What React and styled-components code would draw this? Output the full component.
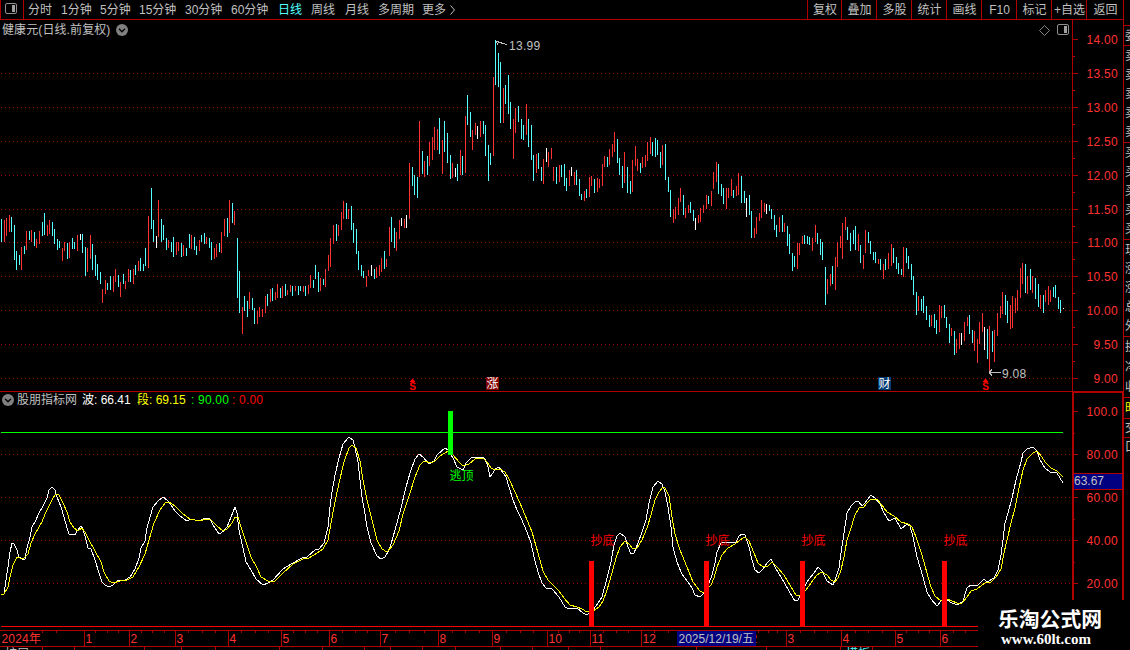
import React from "react";
import styled, { createGlobalStyle } from "styled-components";

const GlobalStyle = createGlobalStyle`
  * {
    box-sizing: border-box;
  }
  body {
    margin: 0;
    background: #000;
    overflow: hidden;
  }
  svg {
    display: block;
  }
`;

const RED = "#b00000";
const UP = "#ff3232";
const DOWN = "#54ffff";
const GRAY = "#c0c0c0";
const FONT = `"Liberation Sans", "Noto Sans CJK SC", sans-serif`;

const Screen = styled.div`
  position: relative;
  display: flex;
  width: 1130px;
  height: 650px;
  overflow: hidden;
  background: #000;
  color: ${GRAY};
  font-family: ${FONT};
  font-size: 12px;
  line-height: 16px;
  white-space: nowrap;
`;
const Main = styled.main`
  display: flex;
  flex-direction: column;
  width: 1123px;
`;

// toolbar
const Toolbar = styled.nav`
  display: flex;
  height: 20px;
  border-bottom: 1px solid ${RED};
`;
const LayoutButton = styled.div`
  width: 24px;
  height: 19px;
  padding: 3px 0 0 4px;
  border-left: 1px solid ${RED};
  border-right: 1px solid ${RED};
`;
const Periods = styled.div`
  display: flex;
  flex: 1;
  padding-left: 4px;
`;
const Period = styled.span`
  display: flex;
  align-items: center;
  width: ${(props) => props.$w}px;
  height: 19px;
  padding-top: 1px;
  color: ${(props) => (props.$active ? DOWN : GRAY)};
`;
const Action = styled.span`
  width: ${(props) => props.$w}px;
  height: 19px;
  padding-left: 1px;
  border-left: 1px solid ${RED};
  line-height: 20px;
  text-align: center;
`;

// panels
const Panel = styled.section`
  display: flex;
  height: ${(props) => props.$h}px;
`;
const Plot = styled.div`
  display: flex;
  flex-direction: column;
  width: 1072px;
`;
const PriceAxis = styled.div`
  width: 51px;
  border-left: 1px solid ${RED};
`;
const ValueAxis = styled.div`
  width: 51px;
  border: solid ${RED};
  border-width: 2px 1px 0 2px;
`;
const PanelHead = styled.div`
  display: flex;
  align-items: center;
  height: ${(props) => props.$h}px;
  padding: 0 3px 0 2px;
  border-top: ${(props) => (props.$line ? `1px solid ${RED}` : "none")};
`;
const StockName = styled.span`
  width: 114px;
  letter-spacing: 0.1px;
`;
const HeadTools = styled.div`
  display: flex;
  align-items: center;
  gap: 7px;
  margin-left: auto;
`;
const Reading = styled.span`
  width: ${(props) => props.$w}px;
  color: ${(props) => props.$color};
  letter-spacing: ${(props) => props.$spacing || 0}px;
`;
const IndicatorName = styled.span`
  width: 68px;
  padding-left: 3px;
`;

// quote list, cut by the window edge
const Side = styled.aside`
  width: 7px;
  padding-top: 25px;
  border-left: 1px solid ${RED};
  overflow: hidden;
`;
const SideGroup = styled.div`
  display: flex;
  flex-direction: column;
  justify-content: space-around;
  height: ${(props) => props.$h}px;
  padding-left: 1px;
  border-top: 1px solid ${RED};
  color: ${(props) => props.$color || GRAY};
`;

const BottomTabs = styled.div`
  display: flex;
  height: 3px;
  overflow: hidden;
  line-height: 14px;
`;
const BottomTab = styled.span`
  flex-shrink: 0;
  width: ${(props) => props.$w}px;
  height: 14px;
  padding-left: 5px;
  border-right: 1px solid ${RED};
  color: ${(props) => (props.$active ? DOWN : GRAY)};
`;

const Brand = styled.div`
  position: absolute;
  right: 0;
  bottom: 0;
  width: 152px;
  height: 50px;
  padding: 6px 0 0 20px;
  background: #000;
  color: #fff;
`;
const BrandName = styled.div`
  height: 24px;
  font: 700 20.8px/24px "Noto Sans CJK SC", sans-serif;
`;
const BrandUrl = styled.div`
  padding-left: 3px;
  font: 700 15px/18px "Liberation Serif", serif;
`;

const periods = [
  ["分时", 33],
  ["1分钟", 39],
  ["5分钟", 39],
  ["15分钟", 46],
  ["30分钟", 46],
  ["60分钟", 47],
  ["日线", 33],
  ["周线", 34],
  ["月线", 33],
  ["多周期", 44],
  ["更多", 27],
];
const actions = ["复权", "叠加", "多股", "统计", "画线", "F10", "标记", "+自选", "返回"];

const sideGroups = [
  { h: 20, items: ["委"] },
  { h: 97, items: ["卖", "卖", "卖", "卖", "卖"] },
  { h: 97, items: ["买", "买", "买", "买", "买"] },
  { h: 97, items: ["现", "涨", "涨", "总", "外"] },
  { h: 61, items: ["换", "净", "收"] },
  { h: 21, items: ["时"], color: "#ffff00" },
  { h: 19, items: ["交"] },
  { h: 19, items: ["口"] },
];

const bottomTabs = [32, 70, 37, 34, 64, 43, 42, 26, 32, 33, 45, 32, 36, 32, 96, 70, 74];

// daily range: colour (r up, c down, w flat), x, top, bottom
const bars = `
c1,219,242 r4,220,242 r6,218,236 r9,215,232 c11,217,232 c14,225,260 c16,251,270 c19,255,265 r21,247,270 c24,246,254
r26,231,250 c29,231,240 r31,230,242 c34,232,246 r36,239,248 r39,231,244 c42,222,236 c44,213,235 r47,225,236 r49,220,234
c52,222,236 c54,229,244 c57,239,250 c59,241,248 r62,248,261 r64,242,251 c67,243,259 r69,242,258 c72,238,249 c74,242,249
r77,235,251 w80,234,240 c82,234,253 c85,247,276 r87,248,272 r90,235,259 c92,244,270 c95,255,276 c97,264,280 c100,272,284
r102,289,303 r105,280,294 c107,283,290 c110,276,290 r113,276,292 r115,269,282 c118,275,287 r120,282,297 c123,274,284
r125,281,289 r128,269,282 c130,270,282 r133,269,284 c135,265,275 r138,261,271 c140,258,271 c143,264,271 c145,248,266
r148,216,268 c151,188,229 c153,220,242 w156,236,248 r158,200,237 c161,219,242 c163,225,240 c166,238,250 r168,240,248
c171,242,252 c173,237,257 r176,242,255 r178,242,251 c181,243,257 r183,245,256 c186,248,256 c189,234,248 r191,235,249
c194,237,250 c196,246,255 r199,240,251 c201,235,242 c204,233,244 r206,237,244 c209,238,248 c211,242,260 r214,248,259
r216,244,257 c219,243,252 r221,232,253 r224,219,236 c227,218,237 r229,200,233 c232,203,223 r234,211,225 c237,238,298
c239,271,313 r242,307,334 c244,296,311 c247,301,317 r249,292,309 c252,298,310 c254,308,324 r257,311,324 r259,307,317
r262,309,317 r265,296,313 c267,294,306 r270,289,302 c272,288,301 r275,292,300 r277,284,298 c280,288,298 r282,286,298
c285,284,296 r287,290,295 r290,285,292 c292,286,296 r295,286,291 c298,286,295 c300,286,291 r303,286,292 c305,286,296
r308,285,294 r310,275,288 c313,280,288 c315,265,279 c318,272,292 r320,278,291 c323,279,285 r325,269,287 r328,255,271
r330,238,267 r333,225,244 c336,224,241 r338,225,236 r341,212,230 r343,201,219 c346,203,219 r348,209,219 c351,206,230
c353,223,243 c356,229,254 c358,251,270 c361,265,276 c363,271,278 r366,276,287 r368,270,276 w371,265,276 c374,269,279
r376,267,278 r379,265,276 r381,258,272 c384,251,269 r386,259,267 r389,227,256 c391,217,242 c394,228,248 r396,232,251
r399,220,239 w401,218,226 r404,219,228 w406,215,228 r409,163,219 c412,167,186 c414,175,195 c417,177,198 r419,121,177
c422,151,174 r424,161,177 c427,156,175 r429,142,166 r432,137,160 r434,127,150 r437,129,150 c439,118,154 r442,140,174
c444,121,152 c447,133,163 c450,155,179 r452,163,178 w455,168,177 c457,164,181 r460,150,175 c462,156,175 r465,116,173
c467,95,125 c470,112,137 r472,130,150 r475,123,135 w477,126,139 r480,121,137 c483,121,134 c485,125,156 c488,145,181
c490,153,165 r493,77,156 c495,40,85 c498,53,87 c500,62,123 r503,88,123 c505,85,104 c508,75,114 c510,102,129
r513,119,159 r515,108,133 c518,106,122 c521,119,139 c523,125,140 r526,104,135 c528,119,147 c531,125,160 c533,155,181
r536,154,173 c538,153,169 c541,167,181 r543,159,184 w546,148,162 r548,152,167 r551,148,159 r553,167,181 c556,167,184
r559,165,182 c561,165,177 c564,164,186 c566,178,191 r569,170,186 w571,167,176 r574,172,185 c576,170,185 c579,179,196
c581,194,200 r584,191,201 c586,189,198 r589,177,197 r591,176,186 c594,179,193 r597,178,192 r599,179,188 r602,164,186
r604,156,167 c607,157,167 r609,149,165 r612,144,157 r614,132,152 c617,139,163 c619,158,175 c622,166,188 r624,152,183
c627,167,193 c630,181,194 r632,160,192 r635,146,166 r637,159,171 c640,163,173 r642,157,168 r645,155,167 r647,142,161
r650,137,154 c652,142,156 c655,138,157 c657,140,155 c660,152,168 r662,145,165 c665,144,180 c668,177,192 c670,190,217
r673,209,223 r675,207,219 r678,198,215 r680,188,202 c683,195,215 r685,208,218 r688,205,213 c690,202,213 c693,210,221
w695,218,230 r698,215,223 r700,208,222 r703,205,213 r706,195,209 c708,196,204 r711,191,206 r713,172,189 r716,162,182
c718,164,194 c721,184,196 c723,188,204 r726,188,209 r728,188,198 r731,179,196 c733,190,198 r736,186,196 r738,173,195
c741,176,203 c744,191,203 w746,198,217 c749,195,215 c751,211,238 r754,228,238 r756,217,234 r759,213,221 r761,200,218
r764,203,212 w766,204,214 c769,205,211 c771,209,219 c774,215,230 c776,225,237 r779,217,232 c782,215,232 r784,223,232
c787,226,246 c789,234,254 c792,253,271 c794,256,267 r797,243,269 r799,243,255 r802,236,244 c804,235,244 c807,236,244
c809,237,245 r812,238,251 r815,225,242 c817,233,244 c820,239,255 c822,242,260 c825,267,305 r827,279,294 r830,274,286
c832,266,284 r835,257,290 r837,242,267 r840,236,248 r842,223,259 r845,217,230 c847,227,240 c850,233,251 c853,230,244
c855,226,250 r858,234,251 c860,245,263 r863,255,269 r865,230,253 c868,232,243 c870,241,254 c873,252,260 c875,252,263
r878,259,264 c880,259,270 r883,264,279 c885,259,270 r888,253,269 r891,244,266 c893,248,263 c896,257,269 c898,263,274
c901,269,275 r903,247,277 c906,248,263 c908,256,269 c911,264,280 c913,276,295 c916,292,315 r918,296,311 c921,299,311
c923,296,313 c926,306,320 c929,315,327 r931,315,326 c934,314,328 c936,320,334 r939,305,332 r941,306,318 c944,305,318
c946,317,328 c949,324,343 r951,328,336 c954,331,355 r956,339,353 r959,333,349 w961,333,345 r964,322,341 r967,317,326
c969,315,334 c972,330,343 r974,331,351 r977,339,363 r979,322,344 r982,313,332 w984,327,350 c987,329,359 r989,326,371
c992,331,352 r994,330,362 r997,313,336 r1000,306,318 r1002,292,314 c1005,295,315 c1007,301,323 r1010,305,329
r1012,296,328 r1015,298,313 r1017,290,311 r1020,268,298 r1022,263,284 c1025,264,293 r1027,276,294 c1030,269,290
r1032,276,293 c1035,278,299 c1038,284,307 r1040,295,309 c1043,295,313 r1045,290,302 r1048,286,305 r1050,290,302
c1053,287,297 c1055,285,298 c1058,297,309 c1060,300,313 w1063,308,309`
  .trim()
  .split(/\s+/)
  .map((s) => [s[0], ...s.slice(1).split(",").map(Number)]);
const barColors = { r: UP, c: DOWN, w: "#fff" };

const waveLine =
  "1,594 4,594 6,580 8,567 10,552 12,543 14,544 17,550 19,557 22,559 25,559 27,548 30,537 32,527 35,522 39,513 43,506 47,498 49,490 52,487 55,490 57,497 61,507 64,517 67,528 69,534 75,535 77,531 81,526 83,529 86,540 88,548 91,549 95,560 99,573 102,582 105,585 109,587 113,585 117,581 125,580 130,577 135,569 139,558 141,548 145,541 147,528 150,517 153,507 158,501 163,497 167,500 171,505 175,511 180,516 187,521 191,519 199,521 205,518 210,519 213,525 219,534 224,531 227,527 231,517 235,507 237,513 239,530 243,548 246,562 251,570 256,579 263,585 268,583 273,580 283,569 293,563 302,558 307,557 315,550 319,549 324,543 328,527 330,507 332,492 335,475 339,458 343,444 349,437 353,440 355,448 358,462 360,480 362,497 364,508 367,527 371,543 377,556 381,559 385,557 388,552 391,544 395,530 401,508 406,487 410,473 415,459 419,454 423,457 429,464 434,461 437,455 445,448 448,450 453,458 457,467 463,470 466,463 471,458 482,457 485,459 488,467 490,477 493,473 495,469 499,467 501,470 506,477 509,487 513,500 517,510 521,518 524,525 527,532 531,543 534,557 538,572 542,583 546,588 552,589 559,597 565,607 569,609 577,608 583,613 587,615 593,610 598,603 602,597 607,578 611,562 614,545 617,536 620,533 625,537 628,547 631,554 634,553 638,543 642,532 646,520 649,503 653,487 658,481 662,484 665,492 668,507 671,527 673,547 677,562 681,572 684,577 688,582 692,588 695,595 700,597 704,593 709,583 712,575 715,563 717,552 721,543 736,542 739,536 742,534 745,535 749,547 752,560 755,570 759,573 763,569 767,563 771,559 775,567 779,574 784,582 790,593 795,601 798,600 804,587 809,579 814,573 818,567 822,571 827,581 833,585 835,580 839,568 841,553 844,533 847,513 851,506 856,501 859,502 862,506 865,503 871,495 875,498 880,504 884,513 889,521 895,518 901,529 907,524 910,526 913,537 917,557 923,577 927,592 931,599 937,606 941,601 947,600 952,603 958,605 963,601 967,588 971,585 977,586 984,579 987,582 994,578 998,570 1001,555 1003,540 1005,523 1008,513 1012,498 1016,480 1021,462 1023,453 1027,449 1033,447 1037,451 1040,460 1045,468 1050,472 1057,473 1060,478 1063,483";
const segmentLine =
  "1,594 4,594 8,587 10,577 13,565 17,557 20,558 24,558 28,554 31,543 35,534 39,527 42,522 45,514 49,506 53,498 56,494 59,495 63,503 67,512 70,522 74,528 78,531 82,528 85,532 89,540 95,551 101,562 104,572 109,581 113,583 120,581 127,580 133,577 139,567 145,554 149,540 154,523 160,510 165,503 169,502 175,506 183,514 190,519 200,521 205,519 211,520 217,526 223,531 227,529 232,523 235,517 238,517 241,527 246,542 251,557 257,568 261,577 268,581 275,581 283,573 293,564 303,559 309,558 317,553 323,549 328,540 331,523 335,502 339,483 344,462 349,448 352,445 356,448 360,461 363,480 367,500 372,520 377,540 382,549 387,552 393,545 399,531 403,514 410,493 415,477 420,465 424,461 431,463 435,461 440,456 448,451 453,455 459,462 463,466 469,464 475,459 483,458 487,462 491,468 495,470 500,469 505,472 509,479 515,492 520,503 525,515 532,532 538,553 543,571 548,580 553,585 559,591 564,598 570,605 577,607 582,609 587,612 593,611 599,607 603,601 607,590 612,573 616,558 620,547 625,541 629,544 633,549 637,548 642,540 647,528 651,515 655,500 659,492 663,487 665,488 669,496 672,517 675,534 680,550 687,567 693,582 700,591 704,593 711,585 714,578 717,567 722,555 728,548 735,544 740,540 745,537 749,541 754,553 758,563 763,567 768,566 772,562 777,567 784,575 791,587 796,595 800,596 806,590 811,583 817,575 822,572 827,575 831,580 835,582 838,578 841,570 844,557 847,540 851,528 855,515 859,508 864,507 867,503 871,499 877,499 881,504 887,512 894,516 901,522 908,524 912,527 916,537 922,555 927,573 931,587 935,596 941,601 947,599 952,601 957,603 962,603 967,597 971,591 977,589 985,583 991,582 996,577 1001,569 1004,553 1007,540 1011,523 1015,508 1019,488 1023,470 1027,459 1033,453 1037,451 1042,457 1045,462 1051,468 1057,471 1063,477";

const prices = [
  ["14.00", 39],
  ["13.50", 73],
  ["13.00", 107],
  ["12.50", 141],
  ["12.00", 175],
  ["11.50", 209],
  ["11.00", 242],
  ["10.50", 276],
  ["10.00", 310],
  ["9.50", 344],
  ["9.00", 378],
];
const levels = [
  ["100.0", 411],
  ["80.00", 454],
  ["60.00", 497],
  ["40.00", 540],
  ["20.00", 583],
];
const months = [
  [84, "1"],
  [129, "2"],
  [175, "3"],
  [228, "4"],
  [281, "5"],
  [329, "6"],
  [380, "7"],
  [438, "8"],
  [492, "9"],
  [547, "10"],
  [590, "11"],
  [641, "12"],
  [694, ""],
  [749, "2"],
  [786, "3"],
  [841, "4"],
  [895, "5"],
  [940, "6"],
  [990, ""],
];
const bottoms = [589, 704, 800, 942];

function PanelIcon() {
  return (
    <svg width="12" height="12" viewBox="0 0 12 12">
      <rect x="0.5" y="0.5" width="11" height="10" rx="1.5" fill="none" stroke="#909090" />
      <rect x="7" y="2" width="3" height="7" fill="#a0a0a0" />
    </svg>
  );
}

function FoldIcon() {
  return (
    <svg width="12" height="12" viewBox="0 0 12 12">
      <circle cx="6" cy="6" r="6" fill="#808080" />
      <path d="M3 4.8l3 3 3-3" fill="none" stroke="#000" strokeWidth="1.3" />
    </svg>
  );
}

function GridLine({ y }) {
  return (
    <line x1="1" x2="1070" y1={y + 0.5} y2={y + 0.5} stroke="#a00000" strokeDasharray="1 3" shapeRendering="crispEdges" />
  );
}

function Dividend({ x }) {
  return (
    <g fill="#ff0000">
      <path d={`M${x - 3} 382l3-3.5 3 3.5z`} />
      <text x={x} y="390" fontSize="10" fontWeight="700" textAnchor="middle">
        S
      </text>
    </g>
  );
}

function Tag({ x, fill, children }) {
  return (
    <g>
      <rect x={x} y="377" width="13" height="13" fill={fill} />
      <text x={x + 0.5} y="388" fill="#fff">
        {children}
      </text>
    </g>
  );
}

function PriceChart() {
  return (
    <svg width="1072" height="351" viewBox="0 40 1072 351">
      {prices.slice(1).map(([label, y]) => (
        <GridLine key={label} y={y} />
      ))}
      {bars.map(([kind, x, top, bottom]) => (
        <rect key={x} x={x} y={top} width="1" height={bottom - top} fill={barColors[kind]} />
      ))}
      <g fill="none" stroke={GRAY} shapeRendering="crispEdges">
        <path d="M496 41.5h3M496 41l2 4M496 41.5l11 3" />
        <path d="M989 372.5h12M989 372.5l3-3M989 372.5l3 3" />
      </g>
      <g fill={GRAY} letterSpacing="0.3">
        <text x="509" y="50">13.99</text>
        <text x="1002" y="378">9.08</text>
      </g>
      <Dividend x={412.5} />
      <Dividend x={985.5} />
      <Tag x={486} fill="#800000">涨</Tag>
      <Tag x={878} fill="#003a70">财</Tag>
    </svg>
  );
}

function PriceScale() {
  return (
    <svg width="50" height="371" viewBox="1073 20 50 371">
      {prices.map(([label, y], i) => (
        <g key={label}>
          <rect x="1073" y={y} width="5" height="1" fill={RED} />
          {i < 10 && <rect x="1073" y={y + 17} width="2" height="1" fill={RED} />}
          <text x="1118" y={y + 5} fill={UP} textAnchor="end" letterSpacing="0.3">
            {label}
          </text>
        </g>
      ))}
    </svg>
  );
}

function IndicatorChart() {
  return (
    <svg width="1072" height="222" viewBox="0 408 1072 222">
      {levels.slice(1).map(([label, y]) => (
        <GridLine key={label} y={y} />
      ))}
      <rect x="1" y="432" width="1062" height="1" fill="#00ff00" />
      <rect x="1" y="626" width="1062" height="1" fill="#ff0000" />
      <g fill="none" shapeRendering="crispEdges">
        <polyline points={waveLine} stroke="#fff" />
        <polyline points={segmentLine} stroke="#ffff00" />
      </g>
      <rect x="448" y="411" width="5" height="44" fill="#00ff00" />
      <text x="449.5" y="479.5" fill="#00ff00">逃顶</text>
      {bottoms.map((x) => (
        <g key={x} fill="#ff0000">
          <rect x={x} y="561" width="5" height="65" />
          <text x={x + 1.5} y="544.5">抄底</text>
        </g>
      ))}
    </svg>
  );
}

function ValueScale() {
  return (
    <svg width="48" height="237" viewBox="1074 393 48 237">
      {levels.map(([label, y]) => (
        <g key={label}>
          <rect x="1074" y={y} width="4" height="1" fill={RED} />
          <rect x="1074" y={y + 22} width="1" height="1" fill={RED} />
          <text x="1118" y={y + 5} fill={UP} textAnchor="end" letterSpacing="0.3">
            {label}
          </text>
        </g>
      ))}
      <rect x="1074" y="473" width="48" height="17" fill={RED} />
      <rect x="1074" y="474" width="48" height="15" fill="#000080" />
      <text x="1074" y="485" fill={GRAY}>63.67</text>
    </svg>
  );
}

function TimeAxis() {
  return (
    <svg width="1123" height="17" viewBox="0 630 1123 17">
      <g fill={RED}>
        <rect x="0" y="630" width="1123" height="1" />
        <rect x="0" y="646" width="1123" height="1" />
        <rect x="42" y="631" width="1" height="2" />
        <rect x="56" y="631" width="1" height="2" />
        {months.slice(0, -1).map(([x, label], i) => {
          const step = (months[i + 1][0] - x) / 4;
          return (
            <g key={x}>
              {label && <rect x={x} y="631" width="1" height="15" />}
              {[1, 2, 3].map((n) => (
                <rect key={n} x={Math.round(x + step * n)} y="631" width="1" height="2" />
              ))}
            </g>
          );
        })}
      </g>
      <g fill={UP}>
        <text x="1.5" y="643" letterSpacing="0.2">2024年</text>
        {months.map(([x, label]) => (
          <text key={x} x={x + 1.5} y="643">
            {label}
          </text>
        ))}
      </g>
      <rect x="677" y="631" width="79" height="15" fill="#000080" />
      <text x="678.5" y="642.5" fill={GRAY}>2025/12/19/五</text>
    </svg>
  );
}

export default function App() {
  return (
    <Screen>
      <GlobalStyle />
      <Main>
        <Toolbar>
          <LayoutButton>
            <PanelIcon />
          </LayoutButton>
          <Periods>
            {periods.map(([name, w]) => (
              <Period key={name} $w={w} $active={name === "日线"}>
                {name}
              </Period>
            ))}
            <Period $w={10}>
              <svg width="7" height="10" viewBox="0 0 7 10">
                <path d="M1.5 0.5l4 4.5-4 4.5" fill="none" stroke={GRAY} />
              </svg>
            </Period>
          </Periods>
          {actions.map((name, i) => (
            <Action key={name} $w={i === 0 ? 34 : i === 8 ? 37 : 35}>
              {name}
            </Action>
          ))}
        </Toolbar>

        {/* price */}
        <Panel $h={371}>
          <Plot>
            <PanelHead $h={20}>
              <StockName>健康元(日线.前复权)</StockName>
              <FoldIcon />
              <HeadTools>
                <svg width="11" height="11" viewBox="0 0 11 11">
                  <path d="M5.5 0.5l5 5-5 5-5-5z" fill="none" stroke="#808080" />
                </svg>
                <PanelIcon />
              </HeadTools>
            </PanelHead>
            <PriceChart />
          </Plot>
          <PriceAxis>
            <PriceScale />
          </PriceAxis>
        </Panel>

        {/* indicator */}
        <Panel $h={239}>
          <Plot>
            <PanelHead $h={17} $line>
              <FoldIcon />
              <IndicatorName>股朋指标网</IndicatorName>
              <Reading $w={55} $color="#fff">波: 66.41</Reading>
              <Reading $w={54} $color="#ffff00">段: 69.15</Reading>
              <Reading $w={41} $color="#00ff00" $spacing={0.2}>: 90.00</Reading>
              <Reading $w={34} $color="#ff0000" $spacing={0.2}>: 0.00</Reading>
            </PanelHead>
            <IndicatorChart />
          </Plot>
          <ValueAxis>
            <ValueScale />
          </ValueAxis>
        </Panel>

        <TimeAxis />
        <BottomTabs>
          <BottomTab $w={43}>扩展</BottomTab>
          {bottomTabs.map((w, i) => (
            <BottomTab key={i} $w={w} />
          ))}
          <BottomTab $w={32} $active>模板</BottomTab>
        </BottomTabs>
      </Main>

      <Side>
        {sideGroups.map((group, i) => (
          <SideGroup key={i} $h={group.h} $color={group.color}>
            {group.items.map((item, n) => (
              <span key={n}>{item}</span>
            ))}
          </SideGroup>
        ))}
      </Side>

      <Brand>
        <BrandName>乐淘公式网</BrandName>
        <BrandUrl>www.60lt.com</BrandUrl>
      </Brand>
    </Screen>
  );
}
